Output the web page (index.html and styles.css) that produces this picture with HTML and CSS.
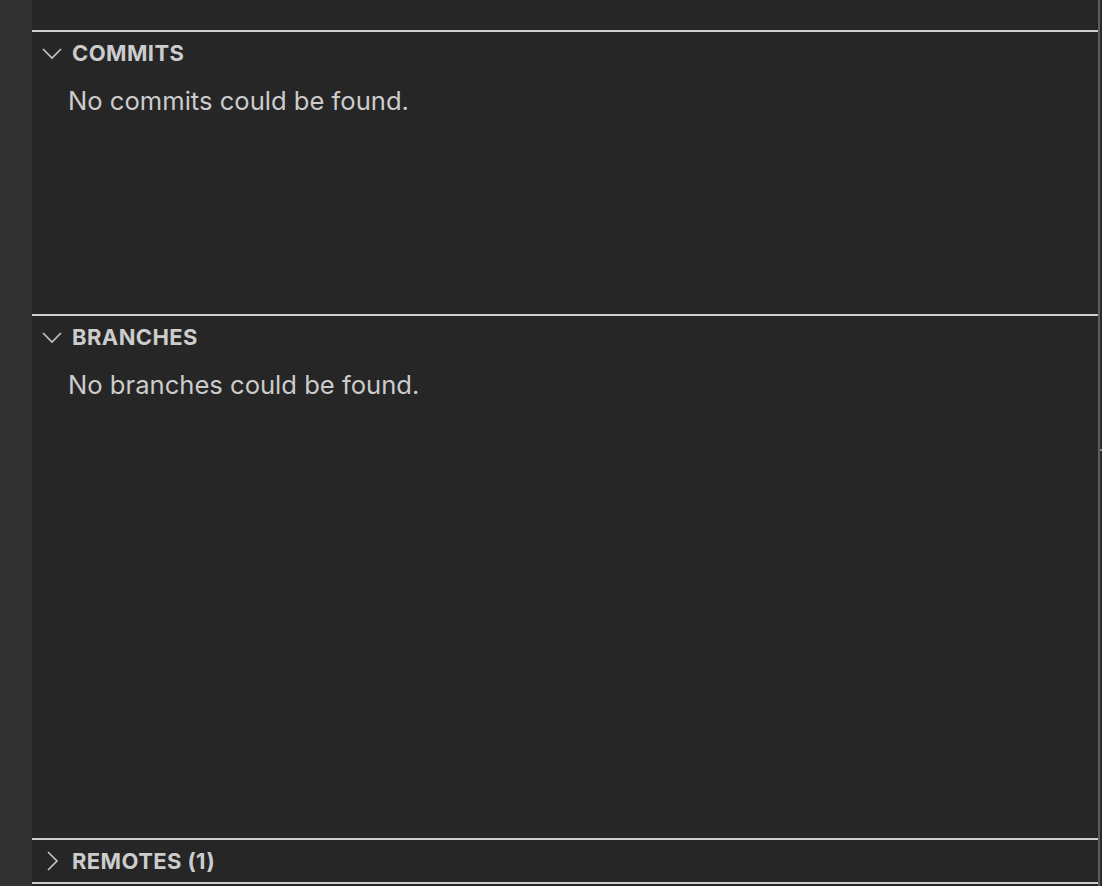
FILE: index.html
```html
<!DOCTYPE html>
<html>
<head>
<meta charset="utf-8">
<link rel="stylesheet" href="styles.css">
</head>
<body>
<div class="app">
  <div class="activity"></div>
  <div class="sidebar">
    <div class="top-space"></div>
    <section class="pane commits">
      <div class="pane-header">
        <svg class="chev" width="20" height="20" viewBox="0 0 20 20"><path d="M1 6 L10 15 L19 6" fill="none" stroke="#c5c5c5" stroke-width="1.6"/></svg>
        <span class="title">COMMITS</span>
      </div>
      <div class="pane-body">No commits could be found.</div>
    </section>
    <section class="pane branches">
      <div class="pane-header">
        <svg class="chev" width="20" height="20" viewBox="0 0 20 20"><path d="M1 6 L10 15 L19 6" fill="none" stroke="#c5c5c5" stroke-width="1.6"/></svg>
        <span class="title">BRANCHES</span>
      </div>
      <div class="pane-body">No branches could be found.</div>
    </section>
    <section class="pane remotes">
      <div class="pane-header">
        <svg class="chev" width="20" height="20" viewBox="0 0 20 20"><path d="M6 1 L15 10 L6 19" fill="none" stroke="#c5c5c5" stroke-width="1.6"/></svg>
        <span class="title">REMOTES (1)</span>
      </div>
    </section>
    <div class="bottom-space"></div>
  </div>
  <div class="edge"><div class="tick"></div></div>
</div>
</body>
</html>
```
FILE: styles.css
```css
html, body {
  margin: 0;
  padding: 0;
  width: 1102px;
  height: 886px;
  overflow: hidden;
  background: #262626;
  font-family: "Inter", "Liberation Sans", sans-serif;
}
.app {
  display: flex;
  height: 886px;
}
.activity {
  width: 32px;
  flex: none;
  background: #323232;
}
.sidebar {
  flex: 1;
  display: flex;
  flex-direction: column;
  background: #262626;
}
.top-space {
  height: 30px;
  flex: none;
}
.pane {
  border-top: 2px solid #cfcfcf;
  flex: none;
  box-sizing: border-box;
}
.commits { height: 284px; }
.branches { height: 524px; }
.remotes { border-bottom: 2px solid #cfcfcf; height: 46px; }
.pane-header {
  height: 42px;
  display: flex;
  align-items: center;
  padding-left: 10px;
  gap: 10px;
}
.chev { flex: none; }
.title {
  color: #cccccc;
  font-weight: 700;
  font-size: 22px;
  letter-spacing: 0.4px;
}
.pane-body {
  color: #cccccc;
  font-size: 25.6px;
  padding-left: 36px;
  margin-top: 4px;
  height: 46px;
  line-height: 46px;
}
.edge {
  width: 4px;
  flex: none;
  display: flex;
  flex-direction: column;
  justify-content: center;
  background: linear-gradient(to right, #5c5c5c 0 2px, #2b2b2b 2px 4px);
}
.tick {
  margin-left: 2px;
  width: 2px;
  height: 2px;
  background: #8a8a8a;
  margin-top: 14px;
}
```
